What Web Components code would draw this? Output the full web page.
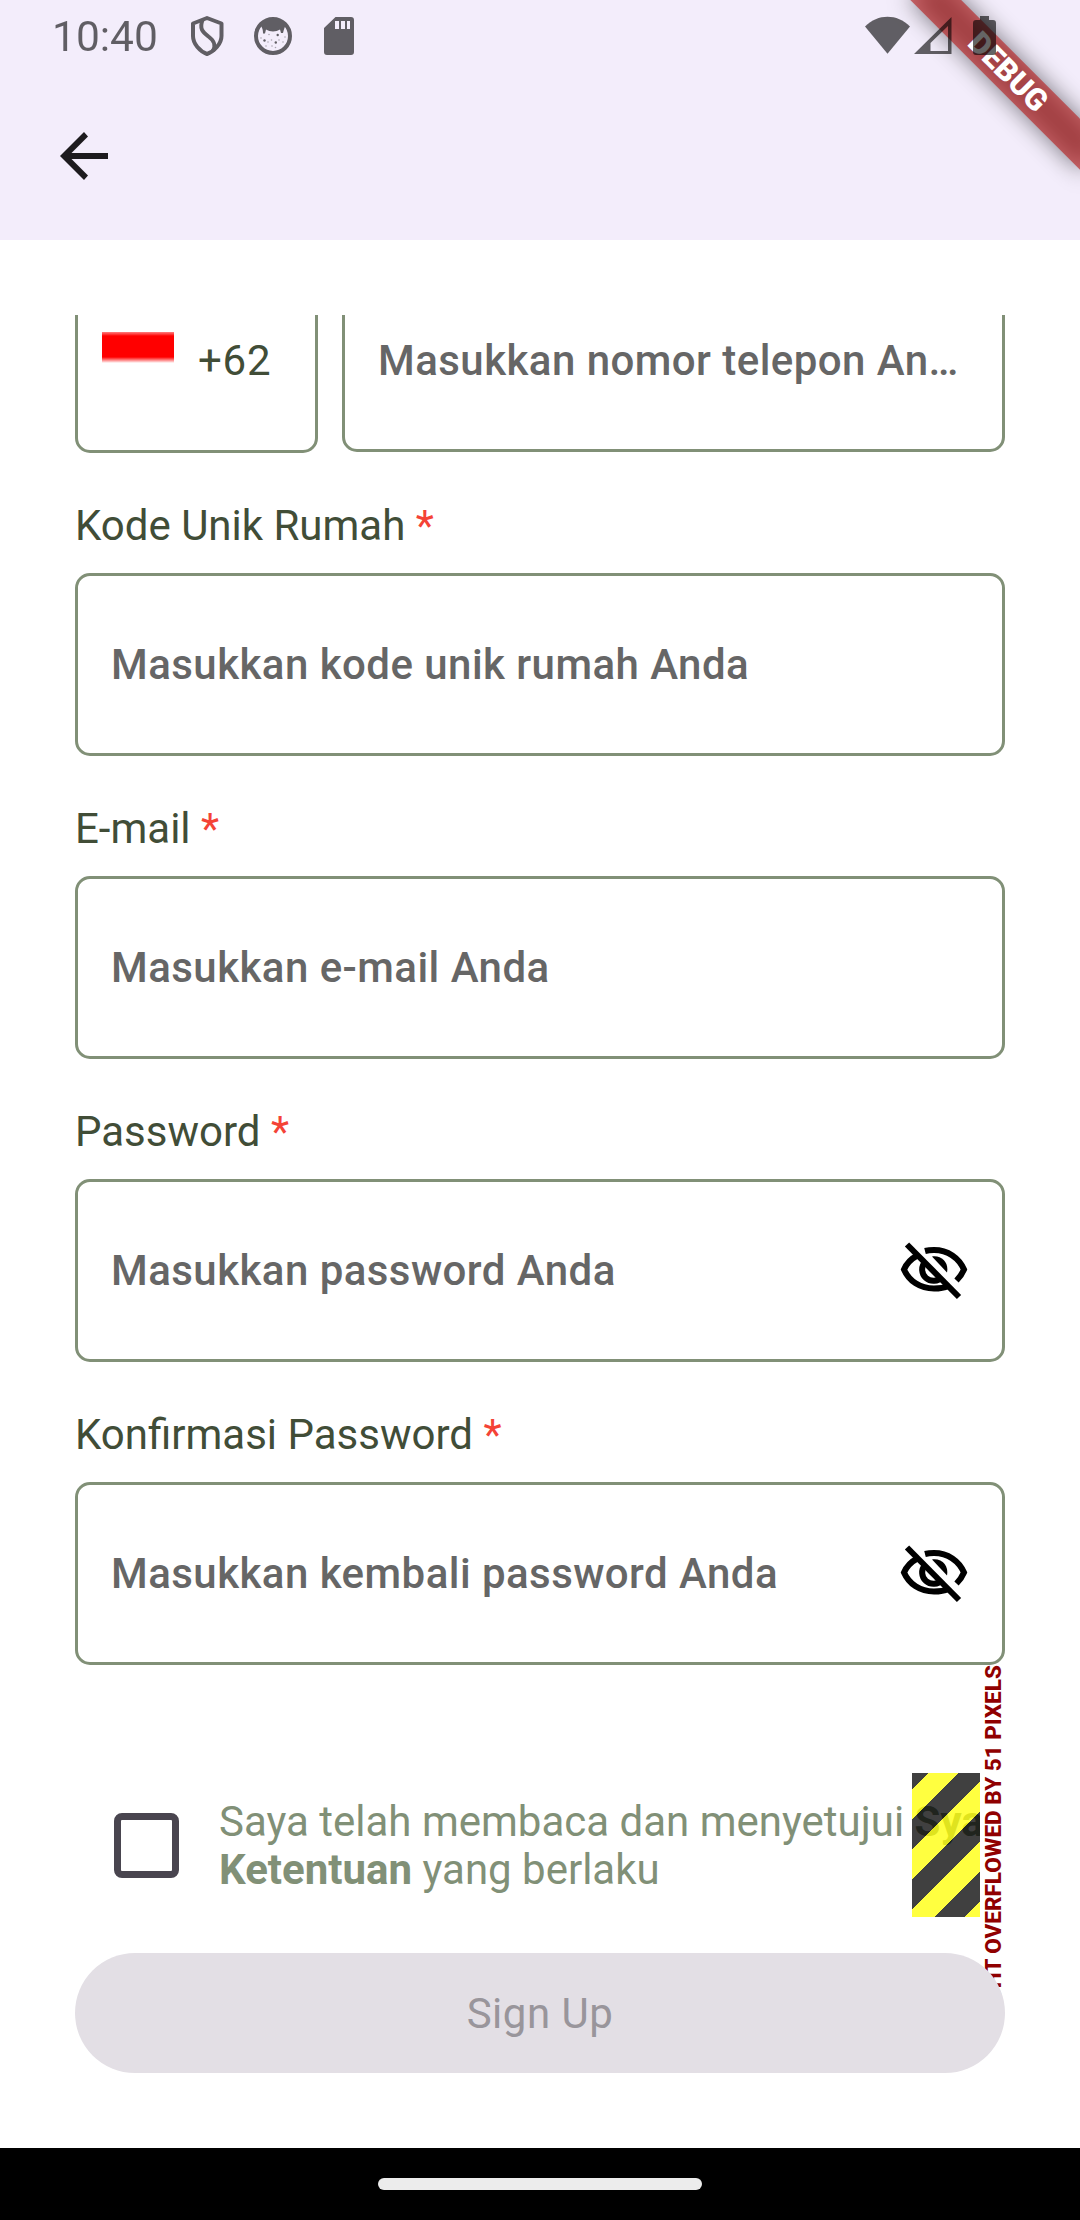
<!DOCTYPE html>
<html lang="id">
<head>
<meta charset="utf-8">
<title>Sign Up</title>
<style>
html,body{margin:0;padding:0;background:#fff}
body{width:1080px;height:2220px;overflow:hidden;font-family:Roboto,"Liberation Sans",sans-serif;font-size:42px;line-height:48px}
</style>
</head>
<body>
<signup-screen></signup-screen>
<script>
const define=(name,html)=>customElements.define(name,class extends HTMLElement{
  constructor(){
    super();
    const t=document.createElement('template');
    t.innerHTML=html;
    this.attachShadow({mode:'open'}).append(t.content.cloneNode(true));
  }
});

define('status-bar',`
<style>
:host{display:flex;justify-content:space-between;height:72px;box-sizing:border-box;position:relative;z-index:3;color:#000;opacity:.6}
.time{font-size:42.500px;line-height:50px;margin:12px 0 0 52px;width:107px;letter-spacing:0;white-space:nowrap}
.left,.right{display:flex}
svg{display:block;overflow:visible}
</style>
<div class="left">
  <div class="time">10:40</div>
  <svg width="200" height="72" viewBox="159 0 200 72">
    <path d="M207 18 221.500 23.500V36C221.500 44 214 51.500 207 54C200 51.500 193 44 193 36V23.500Z" fill="none" stroke="#000" stroke-width="4" stroke-linejoin="round"/>
    <path d="M202.500 20C199 29 203 32 208.500 36.500C214.500 41 216 45 213 51" fill="none" stroke="#000" stroke-width="4"/>
    <circle cx="273" cy="36" r="17" fill="none" stroke="#000" stroke-width="4"/>
    <path d="M260 24C266 17 280 17 286 24C284.500 28 284 29 283 33L281 33L280 29.500C276 32 270 32 266 29.500L265 33.500H263C263 29 262 28 260 24Z"/>
    <g><circle cx="264.500" cy="40.500" r="1.200"/><circle cx="277.700" cy="35" r="1.200"/><circle cx="275.800" cy="42.500" r="1.200"/></g>
    <g opacity=".5"><circle cx="269" cy="34.500" r=".8"/><circle cx="268" cy="42" r=".8"/><circle cx="271.500" cy="40" r=".8"/><circle cx="266" cy="46" r=".8"/><circle cx="275.500" cy="47.500" r=".8"/><circle cx="283" cy="42" r=".8"/><circle cx="279" cy="40" r=".8"/><circle cx="285" cy="37" r=".8"/><circle cx="272" cy="46" r=".8"/><circle cx="261" cy="38" r=".8"/></g>
    <path fill-rule="evenodd" d="M335.500 17H351Q354 17 354 20V52Q354 55 351 55H327Q324 55 324 52V28ZM335 21V29H339V21ZM341 21V29H345V21ZM347 21V29H350V21Z"/>
  </svg>
</div>
<div class="right">
  <svg width="220" height="72" viewBox="860 0 220 72">
    <path d="M887.500 53.800 865 26.500C878 13.500 897 13.500 910 26.500Z"/>
    <path fill-rule="evenodd" d="M951.500 17V54H914ZM948 26 930.500 43V51H948Z"/>
    <path d="M980 16H989V20H993Q996 20 996 23V52Q996 55 993 55H976Q973 55 973 52V23Q973 20 976 20H980Z"/>
  </svg>
</div>`);

define('debug-banner',`
<style>
:host{position:absolute;right:0;top:0;width:240px;height:240px;overflow:hidden;z-index:2}
.pivot{position:absolute;left:240px;top:0;transform:rotate(45deg);transform-origin:0 0}
.shadow,.band{position:absolute;left:-120px;top:84px;width:240px;height:36px}
.shadow{background:rgba(0,0,0,.5);filter:blur(11.900px)}
.band{background:rgba(183,28,28,.627);color:#fff;font-size:30.600px;line-height:36px;font-weight:900;text-align:center}
</style>
<div class="pivot"><div class="shadow"></div><div class="band">DEBUG</div></div>`);

define('app-bar',`
<style>
:host{display:flex;align-items:center;height:168px;padding-left:60px}
svg{display:block}
</style>
<svg width="48" height="48" viewBox="0 0 48 48"><path d="M48 21V27H11.500L28 43.500L24 48L0 24L24 0L28 4.500L11.500 21Z" fill="#1d1b1e"/></svg>`);

define('eye-off',`
<style>:host{display:block;margin-right:-3px}svg{display:block}</style>
<svg width="76" height="66" viewBox="895 1238 76 66" fill="none" stroke="#000" stroke-width="6">
  <path d="M906 1244.500 958 1297"/>
  <path d="M915.500 1256C908 1260 905 1265 903 1269.500C908 1281 919 1288.500 933 1288.500C939 1288.500 943 1288 947 1286"/>
  <path d="M924 1251C927 1250.200 930 1250 933 1250C947 1250 958 1258 963 1269.500C961.500 1273 959 1277 955.500 1280.500"/>
  <path d="M924 1262A10.500 10.500 0 0 0 941 1277"/>
  <path d="M931 1256.500C941 1255 948 1263 946 1272.500Z" fill="#000" stroke="none"/>
</svg>`);

define('field-box',`
<style>
:host{display:flex;align-items:center;justify-content:space-between;box-sizing:border-box;height:183px;border:3px solid #819077;border-radius:15px;padding:0 33px;color:#666;font-weight:500;letter-spacing:.450px;white-space:nowrap}
.text{overflow:hidden;text-overflow:ellipsis}
</style>
<div class="text"><slot></slot></div><slot name="icon"></slot>`);

define('form-field',`
<style>
:host{display:block}
.label{height:48px;line-height:50px;color:#414d37;margin-bottom:24px;white-space:nowrap}
.label i{font-style:normal;color:#f44336}
</style>
<div class="label"><slot name="label"></slot> <i>*</i></div>
<field-box><slot></slot><slot name="icon" slot="icon"></slot></field-box>`);

define('phone-row',`
<style>
:host{display:flex;align-items:flex-end;gap:24px;height:138px;overflow:hidden}
.code{display:flex;width:243px;height:189px;box-sizing:border-box;border:3px solid #819077;border-radius:15px;color:#414d37;padding:65px 24px 0;flex:none;letter-spacing:.750px}
.flag{width:72px;height:31px;margin-right:24px;background:linear-gradient(rgba(255,0,0,.5),#f00 4px,#f00 25px,rgba(255,0,0,0))}
.code span{margin-top:5px}
field-box{flex:1;min-width:0;margin-bottom:1px}
</style>
<div class="code"><div class="flag"></div><span>+62</span></div>
<field-box><slot></slot></field-box>`);

define('overflow-marker',`
<style>
:host{position:absolute;left:837px;top:0;width:93px;height:144px}
.stripes{position:absolute;left:0;top:0;width:67.700px;height:144px;opacity:.75;background:repeating-linear-gradient(135deg,#000 0 12.020px,#ff0 12.020px 33.230px,#000 33.230px 42.426px)}
.msg{position:absolute;left:81px;top:72px;color:#900000;font-size:22.500px;line-height:26px;font-weight:800;white-space:nowrap;transform:translate(-50%,-50%) rotate(-90deg)}
</style>
<div class="stripes"></div><div class="msg">RIGHT OVERFLOWED BY 51 PIXELS</div>`);

define('terms-row',`
<style>
:host{display:flex;align-items:center;height:144px;position:relative;color:#819077}
.box{width:65px;height:65px;box-sizing:border-box;border:7.200px solid #49454f;border-radius:8px;margin:0 40px 0 39px;flex:none}
.text{white-space:nowrap;width:761px;flex:none;overflow:hidden;padding-top:2px}
</style>
<div class="box"></div>
<div class="text">Saya telah membaca dan menyetujui <b>Sya</b><br><b>Ketentuan</b> yang berlaku</div>
<overflow-marker></overflow-marker>`);

define('pill-button',`
<style>
:host{display:flex;align-items:center;justify-content:center;box-sizing:border-box;height:120px;padding-top:2px;border-radius:60px;background:#e3dfe5;color:#99959b;letter-spacing:.500px;position:relative;z-index:1}
</style><slot></slot>`);

define('nav-bar',`
<style>
:host{display:flex;align-items:center;justify-content:center;height:72px;background:#000}
div{width:324px;height:12px;border-radius:6px;background:#ececec}
</style><div></div>`);

define('signup-screen',`
<style>
:host{display:flex;flex-direction:column;height:2220px;position:relative;overflow:hidden}
header{background:#f3edfb;height:240px}
main{flex:1;padding:75px 75px 0}
form-field{margin-top:48px}
terms-row{margin-top:108px}
pill-button{margin-top:36px}
</style>
<header><status-bar></status-bar><app-bar></app-bar></header>
<debug-banner></debug-banner>
<main>
  <phone-row>Masukkan nomor telepon Anda</phone-row>
  <form-field><span slot="label">Kode Unik Rumah</span>Masukkan kode unik rumah Anda</form-field>
  <form-field><span slot="label">E-mail</span>Masukkan e-mail Anda</form-field>
  <form-field><span slot="label">Password</span>Masukkan password Anda<eye-off slot="icon"></eye-off></form-field>
  <form-field><span slot="label">Konfirmasi Password</span>Masukkan kembali password Anda<eye-off slot="icon"></eye-off></form-field>
  <terms-row></terms-row>
  <pill-button>Sign Up</pill-button>
</main>
<nav-bar></nav-bar>`);
</script>
</body>
</html>
